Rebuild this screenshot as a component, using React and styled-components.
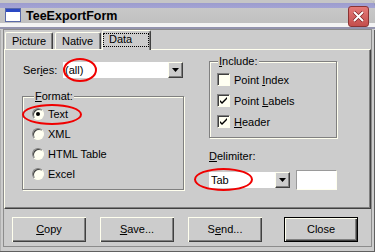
import React from "react";
import styled, { createGlobalStyle, css } from "styled-components";

const hi = "#ffffee";
const face = "#cccccc";
const shadow = "#808080";
const dark = "#404040";

const GlobalStyle = createGlobalStyle`
  html, body {
    margin: 0;
    padding: 0;
    background: ${face};
  }
  body {
    font-family: "Liberation Sans", Arial, sans-serif;
    font-size: 11px;
    color: #000;
  }
`;

const Window = styled.div`
  width: 375px;
  height: 252px;
  box-sizing: border-box;
  display: flex;
  flex-direction: column;
  background: ${face};
  border-radius: 0 6px 0 0;
  box-shadow: inset -1px -1px 0 #606060, inset 1px 0 0 #b0b0b0;
  overflow: hidden;
`;

const TitleBar = styled.div`
  flex: none;
  height: 30px;
  box-sizing: border-box;
  display: flex;
  align-items: flex-start;
  padding: 8px 6px 0 5px;
  background: linear-gradient(
    to bottom,
    #c6c6c6 0px,
    #c6c6c6 3px,
    #9c9cce 3px,
    #a4a4d4 8px,
    #c8c8c8 8px,
    #c0c0c0 23px,
    #f4f4f4 23px,
    #f4f4f4 27px,
    #9494ae 27px,
    #9494ae 29px,
    ${face} 29px
  );
`;

const Title = styled.div`
  margin-left: 5px;
  padding-top: 1px;
  font-size: 12.5px;
  line-height: 15px;
  font-weight: bold;
`;

const CloseBox = styled.div`
  margin-left: auto;
  margin-top: -2px;
  width: 21px;
  height: 21px;
  box-sizing: border-box;
  border: 1px solid #8a3333;
  border-radius: 3px;
  background: linear-gradient(to bottom, #e47a78, #c44e4c);
  display: flex;
  align-items: center;
  justify-content: center;
`;

const Client = styled.div`
  flex: 1;
  margin: 0 4px 6px 4px;
  display: flex;
  flex-direction: column;
  box-shadow: 0 0 0 1px #8c8c8c;
`;

const TabStrip = styled.div`
  height: 19px;
  display: flex;
  align-items: flex-end;
  padding-left: 1px;
  position: relative;
  z-index: 1;
`;

const Tab = styled.div`
  box-sizing: border-box;
  width: ${(p) => p.$w}px;
  height: ${(p) => (p.$active ? 20 : 17)}px;
  margin-left: ${(p) => p.$gap || 0}px;
  margin-bottom: ${(p) => (p.$active ? -1 : 0)}px;
  padding: 2px 0 0 6px;
  line-height: 13px;
  background: ${face};
  border-top: 1px solid ${hi};
  border-left: 1px solid ${hi};
  border-right: 1px solid ${dark};
  box-shadow: inset -1px 0 0 ${shadow};
  border-radius: 2px 2px 0 0;
  position: relative;
  ${(p) =>
    p.$active &&
    css`
      &::after {
        content: "";
        position: absolute;
        top: 2px;
        left: 0;
        right: 1px;
        bottom: 3px;
        border: 1px dotted #000;
      }
    `}
`;

const Panel = styled.div`
  height: 160px;
  box-sizing: border-box;
  border-top: 1px solid ${hi};
  border-left: 1px solid ${hi};
  border-right: 1px solid ${dark};
  border-bottom: 1px solid ${dark};
  box-shadow: inset -1px -1px 0 ${shadow};
  display: flex;
  gap: 25px;
  padding-left: 17px;
`;

const Column = styled.div`
  width: ${(p) => p.$w}px;
  padding-top: ${(p) => p.$top}px;
  display: flex;
  flex-direction: column;
`;

const FieldRow = styled.div`
  display: flex;
  align-items: center;
  gap: ${(p) => p.$gap || 0}px;
  margin-top: ${(p) => p.$mt || 0}px;
`;

const Label = styled.div`
  width: ${(p) => (p.$w ? `${p.$w}px` : "auto")};
  margin-left: ${(p) => p.$ml || 0}px;
  margin-top: ${(p) => p.$mt || 0}px;
  line-height: 13px;
`;

const Acc = styled.span`
  text-decoration: underline;
  text-underline-offset: 1px;
`;

const Combo = styled.div`
  position: relative;
  box-sizing: border-box;
  width: ${(p) => p.$w}px;
  height: 16px;
  display: flex;
  align-items: center;
  background: #fff;
  padding-left: 2px;
`;

const ComboText = styled.div`
  flex: 1;
  line-height: 13px;
`;

const DropButton = styled.div`
  width: 15px;
  height: 16px;
  box-sizing: border-box;
  background: ${face};
  border-top: 1px solid ${hi};
  border-left: 1px solid ${hi};
  border-right: 1px solid ${dark};
  border-bottom: 1px solid ${dark};
  box-shadow: inset -1px -1px 0 ${shadow};
  display: flex;
  align-items: center;
  justify-content: center;
`;

const Edit = styled.div`
  width: 41px;
  height: 20px;
  box-sizing: border-box;
  background: #fff;
  border-top: 1px solid #9a9a9a;
  border-left: 1px solid #9a9a9a;
  border-right: 1px solid ${hi};
  border-bottom: 1px solid ${hi};
`;

const Group = styled.fieldset`
  margin: ${(p) => p.$mt || 0}px 0 0 0;
  padding: 0 0 0 ${(p) => p.$pl}px;
  min-width: 0;
  height: ${(p) => p.$h}px;
  box-sizing: border-box;
  border: 1px solid ${shadow};
  box-shadow: inset 1px 1px 0 ${hi}, 1px 1px 0 ${hi};
`;

const Legend = styled.legend`
  margin-left: ${(p) => p.$ml}px;
  padding: 0 1px;
  line-height: 13px;
  background: ${face};
`;

const OptionRow = styled.div`
  position: relative;
  height: ${(p) => p.$h}px;
  display: flex;
  align-items: center;
  gap: 4px;
  &:first-of-type {
    margin-top: 1px;
  }
`;

const Radio = styled.div`
  width: 12px;
  height: 12px;
  box-sizing: border-box;
  border-radius: 50%;
  background: #fffff2;
  border: 1px solid;
  border-color: ${shadow} ${hi} ${hi} ${shadow};
  box-shadow: inset 1px 1px 0 ${dark};
  display: flex;
  align-items: center;
  justify-content: center;
  &::after {
    content: "";
    width: 4px;
    height: 4px;
    border-radius: 50%;
    background: ${(p) => (p.$on ? "#000" : "transparent")};
  }
`;

const Check = styled.div`
  width: 13px;
  height: 13px;
  box-sizing: border-box;
  background: #fffff2;
  border-top: 1px solid ${shadow};
  border-left: 1px solid ${shadow};
  border-right: 1px solid ${hi};
  border-bottom: 1px solid ${hi};
  box-shadow: inset 1px 1px 0 ${dark};
  display: flex;
  align-items: center;
  justify-content: center;
`;

const Mark = styled.div`
  position: absolute;
  left: ${(p) => p.$l}px;
  top: ${(p) => p.$t}px;
  width: ${(p) => p.$w}px;
  height: ${(p) => p.$h}px;
  box-sizing: border-box;
  border: 2px solid #f00000;
  border-radius: 50%;
  pointer-events: none;
  z-index: 2;
`;

const ButtonRow = styled.div`
  display: flex;
  gap: 14px;
  padding: 8px 13px 0 8px;
`;

const Button = styled.div`
  width: 74px;
  height: 25px;
  box-sizing: border-box;
  display: flex;
  align-items: center;
  justify-content: center;
  background: ${face};
  line-height: 13px;
  box-shadow: inset 1px 1px 0 ${hi}, inset -1px -1px 0 ${dark},
    inset -2px -2px 0 ${shadow};
  ${(p) =>
    p.$default &&
    css`
      margin-left: auto;
      border: 1px solid #000;
    `}
`;

const Arrow = () => (
  <svg width="7" height="4" viewBox="0 0 7 4">
    <path d="M0 0h7L3.5 4z" fill="#000" />
  </svg>
);

const Tick = () => (
  <svg width="9" height="9" viewBox="0 0 9 9">
    <path d="M1 4l2 2 5-5v2L3 8 1 6z" fill="#000" />
  </svg>
);

const AppIcon = () => (
  <svg width="16" height="14" viewBox="0 0 16 14">
    <rect x="0.5" y="0.5" width="15" height="13" fill="#fff" stroke="#5a6aa8" />
    <rect x="1" y="1" width="14" height="3" fill="#2a48c4" />
  </svg>
);

const CloseIcon = () => (
  <svg width="13" height="13" viewBox="0 0 13 13">
    <path d="M2 2l9 9M11 2l-9 9" stroke="#7a2020" strokeWidth="3.2" />
    <path d="M2 2l9 9M11 2l-9 9" stroke="#fff" strokeWidth="2" />
  </svg>
);

const formats = ["Text", "XML", "HTML Table", "Excel"];

const includes = [
  { pre: "Point ", key: "I", post: "ndex", on: false },
  { pre: "Point ", key: "L", post: "abels", on: true },
  { pre: "", key: "H", post: "eader", on: true },
];

export default function App() {
  return (
    <>
      <GlobalStyle />
      <Window>
        <TitleBar>
          <AppIcon />
          <Title>TeeExportForm</Title>
          <CloseBox>
            <CloseIcon />
          </CloseBox>
        </TitleBar>
        <Client>
          <TabStrip>
            <Tab $w={48}>Picture</Tab>
            <Tab $w={46} $gap={2}>Native</Tab>
            <Tab $w={49} $gap={1} $active>
              Data
            </Tab>
          </TabStrip>
          <Panel>
            <Column $w={162} $top={12}>
              <FieldRow>
                <Label $w={40} $ml={1}>
                  Ser<Acc>i</Acc>es:
                </Label>
                <Combo $w={120}>
                  <ComboText>(all)</ComboText>
                  <DropButton>
                    <Arrow />
                  </DropButton>
                  <Mark $l={0} $t={-4} $w={34} $h={24} />
                </Combo>
              </FieldRow>
              <Group $mt={12} $h={100} $pl={9}>
                <Legend $ml={2}>
                  <Acc>F</Acc>ormat:
                </Legend>
                {formats.map((f, i) => (
                  <OptionRow key={f} $h={20}>
                    <Radio $on={i === 0} />
                    {f}
                    {i === 0 && <Mark $l={-10} $t={0} $w={60} $h={21} />}
                  </OptionRow>
                ))}
              </Group>
            </Column>
            <Column $w={128} $top={5}>
              <Group $h={83} $pl={7}>
                <Legend $ml={1}>
                  <Acc>I</Acc>nclude:
                </Legend>
                {includes.map((c) => (
                  <OptionRow key={c.key} $h={21}>
                    <Check>{c.on && <Tick />}</Check>
                    <span>
                      {c.pre}
                      <Acc>{c.key}</Acc>
                      {c.post}
                    </span>
                  </OptionRow>
                ))}
              </Group>
              <Label $mt={12}>
                <Acc>D</Acc>elimiter:
              </Label>
              <FieldRow $mt={7} $gap={6}>
                <Combo $w={81}>
                  <ComboText>Tab</ComboText>
                  <DropButton>
                    <Arrow />
                  </DropButton>
                  <Mark $l={-15} $t={-4} $w={59} $h={23} />
                </Combo>
                <Edit />
              </FieldRow>
            </Column>
          </Panel>
          <ButtonRow>
            <Button>
              <span>
                <Acc>C</Acc>opy
              </span>
            </Button>
            <Button>
              <span>
                <Acc>S</Acc>ave...
              </span>
            </Button>
            <Button>
              <span>
                S<Acc>e</Acc>nd...
              </span>
            </Button>
            <Button $default>Close</Button>
          </ButtonRow>
        </Client>
      </Window>
    </>
  );
}
